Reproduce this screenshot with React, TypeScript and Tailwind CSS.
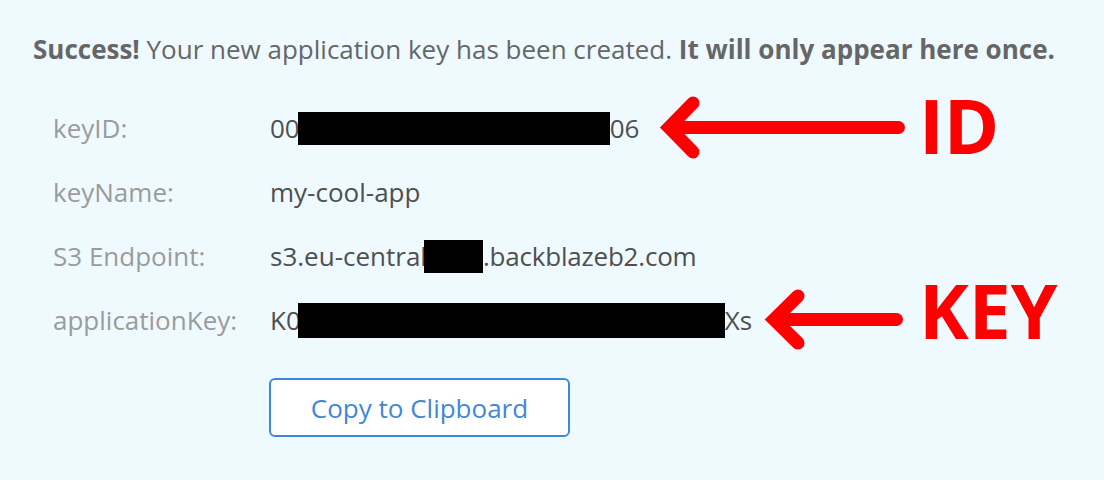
import React from "react";

function Redact({ w, h, shift = 0 }: { w: number; h: number; shift?: number }) {
  return <span className="inline-block bg-black shrink-0" style={{ width: w, height: h, marginLeft: shift }} />;
}

function Row({ label, children }: { label: string; children: React.ReactNode }) {
  return (
    <div className="flex items-center h-16">
      <div className="w-[217px] shrink-0 text-[#9b9b9b]">{label}</div>
      <div className="flex items-center text-[#4f4f4f]">{children}</div>
    </div>
  );
}

export default function App() {
  return (
    <div
      className="relative w-[1104px] h-[480px] bg-[#eefaff] overflow-hidden text-[26px]"
      style={{ fontFamily: '"Open Sans", "Liberation Sans", sans-serif' }}
    >
      <div className="pt-[30px] pl-[33px]">
        <p className="leading-[1.5] text-[#666666] whitespace-nowrap">
          <span className="font-bold">Success!</span> Your new application key has been created.{" "}
          <span className="font-bold">It will only appear here once.</span>
        </p>
        <div className="mt-[27px] pl-[20px]">
          <Row label="keyID:">
            <span>00</span>
            <Redact w={312} h={33} shift={-2} />
            <span>06</span>
          </Row>
          <Row label="keyName:">
            <span>my-cool-app</span>
          </Row>
          <Row label="S3 Endpoint:">
            <span>s3.eu-central</span>
            <Redact w={59} h={33} shift={-3} />
            <span className="tracking-[-0.2px]">.backblazeb2.com</span>
          </Row>
          <Row label="applicationKey:">
            <span>K0</span>
            <Redact w={427} h={35} shift={-3} />
            <span>Xs</span>
          </Row>
          <div className="pl-[216px] mt-[26px]">
            <button className="w-[301px] h-[59px] bg-white border-2 border-[#3f88d6] rounded-md text-[#3f88d6] text-[26px] leading-none">
              Copy to Clipboard
            </button>
          </div>
        </div>
      </div>

      <svg className="absolute left-0 top-0" width="1104" height="480" viewBox="0 0 1104 480">
        <g stroke="#ff0000" strokeWidth="13" fill="none" strokeLinecap="round" strokeLinejoin="miter">
          <line x1="670" y1="127.5" x2="898.5" y2="127.5" />
          <polyline points="693,103 669,127.5 693,152" />
          <line x1="775" y1="319.5" x2="896.5" y2="319.5" />
          <polyline points="798,296 774,319.5 798,343" />
        </g>
      </svg>
      <div className="absolute left-[919px] top-[88px] text-[75px] leading-none font-bold text-[#ff0000]">ID</div>
      <div className="absolute left-[919px] top-[273px] text-[75px] leading-none font-bold text-[#ff0000]">KEY</div>
    </div>
  );
}
